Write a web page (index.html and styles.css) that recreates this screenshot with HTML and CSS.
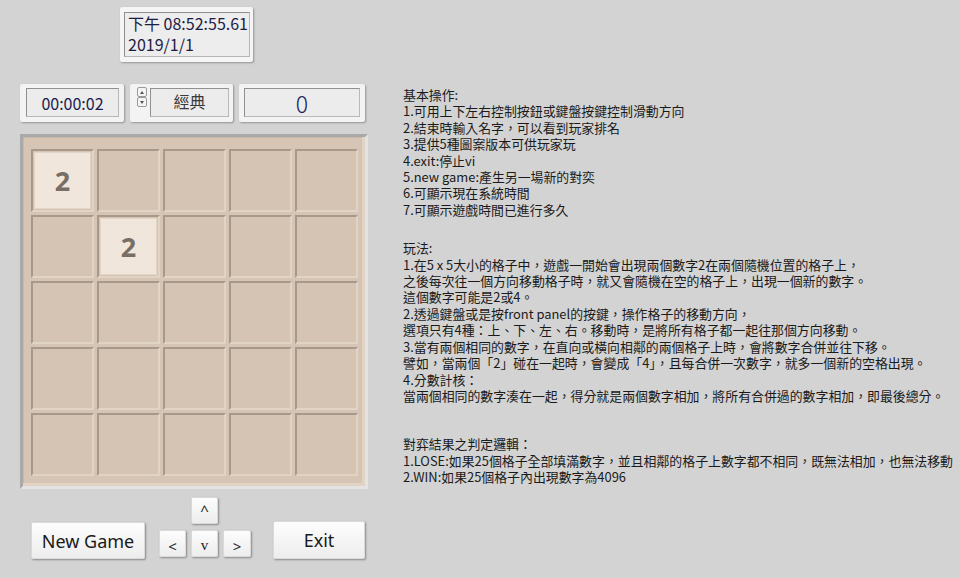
FILE: index.html
```html
<!DOCTYPE html>
<html lang="zh-Hant">
<head>
<meta charset="utf-8">
<title>2048</title>
<link rel="stylesheet" href="styles.css">
</head>
<body>
<div class="app">
  <div class="left">
    <div class="clock">
      <div class="clock-in">
        <div>下午 08:52:55.61</div>
        <div>2019/1/1</div>
      </div>
    </div>
    <div class="controls">
      <div class="ctl timer"><div class="field">00:00:02</div></div>
      <div class="ctl combo">
        <div class="spin"><span class="sp-up"></span><span class="sp-dn"></span></div>
        <div class="field cjk">經典</div>
      </div>
      <div class="ctl score"><div class="field big">0</div></div>
    </div>
    <div class="board">
      <div class="grid">
        <div class="tile"><div class="num">2</div></div>
        <div class="tile"></div><div class="tile"></div><div class="tile"></div><div class="tile"></div>
        <div class="tile"></div>
        <div class="tile"><div class="num">2</div></div>
        <div class="tile"></div><div class="tile"></div><div class="tile"></div>
        <div class="tile"></div><div class="tile"></div><div class="tile"></div><div class="tile"></div><div class="tile"></div>
        <div class="tile"></div><div class="tile"></div><div class="tile"></div><div class="tile"></div><div class="tile"></div>
        <div class="tile"></div><div class="tile"></div><div class="tile"></div><div class="tile"></div><div class="tile"></div>
      </div>
    </div>
    <div class="buttons">
      <button class="btn newgame">New Game</button>
      <div class="arrows">
        <button class="btn arr a-up">^</button>
        <button class="btn arr a-left">&lt;</button>
        <button class="btn arr a-down">v</button>
        <button class="btn arr a-right">&gt;</button>
      </div>
      <button class="btn exit">Exit</button>
    </div>
  </div>
  <div class="help">
    <div class="sec">
      <div>基本操作:</div>
      <div>1.可用上下左右控制按鈕或鍵盤按鍵控制滑動方向</div>
      <div>2.結束時輸入名字，可以看到玩家排名</div>
      <div>3.提供5種圖案版本可供玩家玩</div>
      <div>4.exit:停止vi</div>
      <div>5.new game:產生另一場新的對奕</div>
      <div>6.可顯示現在系統時間</div>
      <div>7.可顯示遊戲時間已進行多久</div>
    </div>
    <div class="sec sec2">
      <div>玩法:</div>
      <div>1.在5 x 5大小的格子中，遊戲一開始會出現兩個數字2在兩個隨機位置的格子上，</div>
      <div>之後每次往一個方向移動格子時，就又會隨機在空的格子上，出現一個新的數字。</div>
      <div>這個數字可能是2或4。</div>
      <div>2.透過鍵盤或是按front panel的按鍵，操作格子的移動方向，</div>
      <div>選項只有4種：上、下、左、右。移動時，是將所有格子都一起往那個方向移動。</div>
      <div>3.當有兩個相同的數字，在直向或橫向相鄰的兩個格子上時，會將數字合併並往下移。</div>
      <div>譬如，當兩個「2」碰在一起時，會變成「4」，且每合併一次數字，就多一個新的空格出現。</div>
      <div>4.分數計核：</div>
      <div>當兩個相同的數字湊在一起，得分就是兩個數字相加，將所有合併過的數字相加，即最後總分。</div>
    </div>
    <div class="sec sec3">
      <div>對弈結果之判定邏輯：</div>
      <div>1.LOSE:如果25個格子全部填滿數字，並且相鄰的格子上數字都不相同，既無法相加，也無法移動</div>
      <div>2.WIN:如果25個格子內出現數字為4096</div>
    </div>
  </div>
</div>
</body>
</html>
```

FILE: styles.css
```css
html, body {
  margin: 0;
  padding: 0;
}

body {
  background: #d3d3d3;
  font-family: "Noto Sans CJK TC", "Noto Sans", sans-serif;
  color: #1e1e1e;
}

.app {
  display: flex;
  width: 960px;
  height: 578px;
  overflow: hidden;
}

.left {
  width: 380px;
  flex: none;
  padding-top: 7px;
}

/* clock */
.clock {
  margin-left: 120px;
  width: 133px;
  height: 55px;
  box-sizing: border-box;
  padding: 5px 3px 5px 4px;
  background: #f5f5f5;
  border-radius: 2px;
  box-shadow: 1px 1px 2px rgba(0, 0, 0, 0.3);
}

.clock-in {
  height: 100%;
  box-sizing: border-box;
  border: 1px solid #8f8f8f;
  border-right-color: #b5b5b5;
  border-bottom-color: #b5b5b5;
  background: #ededed;
  padding: 0 0 0 3px;
  font-size: 16px;
  line-height: 21px;
  color: #1c1c44;
  overflow: hidden;
  white-space: nowrap;
}

/* controls row */
.controls {
  display: flex;
  gap: 6px;
  margin: 22px 0 0 20px;
}

.ctl {
  display: flex;
  align-items: flex-start;
  height: 38px;
  box-sizing: border-box;
  padding: 4px 5px 5px 6px;
  background: #f3f3f3;
  border-radius: 2px;
  box-shadow: 1px 1px 2px rgba(0, 0, 0, 0.3);
}

.timer { width: 104px; }
.combo { width: 103px; padding-left: 7px; padding-right: 4px; }
.score { width: 126px; padding-left: 5px; }

.field {
  flex: 1;
  height: 29px;
  box-sizing: border-box;
  border: 1px solid #909090;
  border-right-color: #b8b8b8;
  border-bottom-color: #b8b8b8;
  background: #ececec;
  display: flex;
  align-items: center;
  justify-content: center;
  font-size: 16px;
  color: #1c1c50;
}

.field.cjk {
  color: #3a3a3a;
  padding-bottom: 3px;
}

.field.big {
  font-size: 23px;
  font-weight: 300;
  color: #1c1c60;
}

.spin {
  width: 10px;
  height: 20px;
  margin: -1px 3px 0 0;
  display: flex;
  flex-direction: column;
}

.spin span {
  flex: 1;
  box-sizing: border-box;
  border: 1px solid #9a9a9a;
  background: #f4f4f4;
  border-radius: 2px;
  position: relative;
}

.spin span::after {
  content: "";
  position: absolute;
  left: 2px;
  top: 3px;
  border-left: 2px solid transparent;
  border-right: 2px solid transparent;
}

.sp-up::after { border-bottom: 3px solid #555; }
.sp-dn::after { border-top: 3px solid #555; }

/* board */
.board {
  margin: 12px 0 0 20px;
  width: 348px;
  height: 355px;
  box-sizing: border-box;
  border: 3px solid;
  border-color: #a9a9a9 #e3e3e3 #e3e3e3 #a9a9a9;
  background: #d6c5b4;
  box-shadow: inset -3px -3px 0 #e2d3c3, inset 1px 1px 0 #c9b8a7;
  padding: 12px 7px 10px 8px;
}

.grid {
  display: grid;
  grid-template-columns: repeat(5, 63px);
  grid-template-rows: repeat(5, 63px);
  gap: 3px;
}

.tile {
  box-sizing: border-box;
  background: #d5c4b3;
  border: 2px solid;
  border-color: #a6988a #e2d4c5 #e2d4c5 #a6988a;
  display: flex;
}

.num {
  flex: 1;
  margin: 1px;
  background: #f1e6db;
  border: 1px solid #e4d5c6;
  display: flex;
  align-items: center;
  justify-content: center;
  font-family: "Open Sans", "Noto Sans", sans-serif;
  font-weight: 700;
  font-size: 27px;
  color: #776e65;
}

/* buttons */
.buttons {
  display: flex;
  align-items: flex-start;
  margin: 8px 0 0 31px;
}

.btn {
  margin: 0;
  padding: 0;
  box-sizing: border-box;
  background: linear-gradient(#fdfdfd, #ededed);
  border: 1px solid #dadada;
  border-radius: 2px;
  box-shadow: 1px 1px 2px rgba(0, 0, 0, 0.35);
  font-family: "Noto Sans", sans-serif;
  color: #1a1a1a;
  display: flex;
  align-items: center;
  justify-content: center;
}

.newgame {
  width: 114px;
  height: 37px;
  margin-top: 25px;
  font-size: 18px;
}

.exit {
  width: 92px;
  height: 38px;
  margin: 24px 0 0 22px;
  font-size: 18px;
}

.arrows {
  margin-left: 14px;
  display: grid;
  grid-template-columns: 27px 27px 28px;
  grid-template-rows: 27px 27px;
  column-gap: 5px;
  row-gap: 6px;
}

.arr {
  width: 100%;
  height: 100%;
  font-size: 15px;
  color: #222;
}

.a-up { grid-column: 2; grid-row: 1; padding-bottom: 2px; }
.a-left { grid-column: 1; grid-row: 2; padding-top: 4px; }
.a-down { grid-column: 2; grid-row: 2; padding-top: 4px; font-family: "Liberation Serif", serif; }
.a-right { grid-column: 3; grid-row: 2; padding-top: 4px; }

/* help text */
.help {
  margin-left: 23px;
  padding-top: 87px;
  font-size: 12.9px;
  line-height: 16.4px;
  color: #1a1a1a;
  white-space: nowrap;
}

.sec2 { margin-top: 22px; }
.sec3 { margin-top: 32px; }
```
